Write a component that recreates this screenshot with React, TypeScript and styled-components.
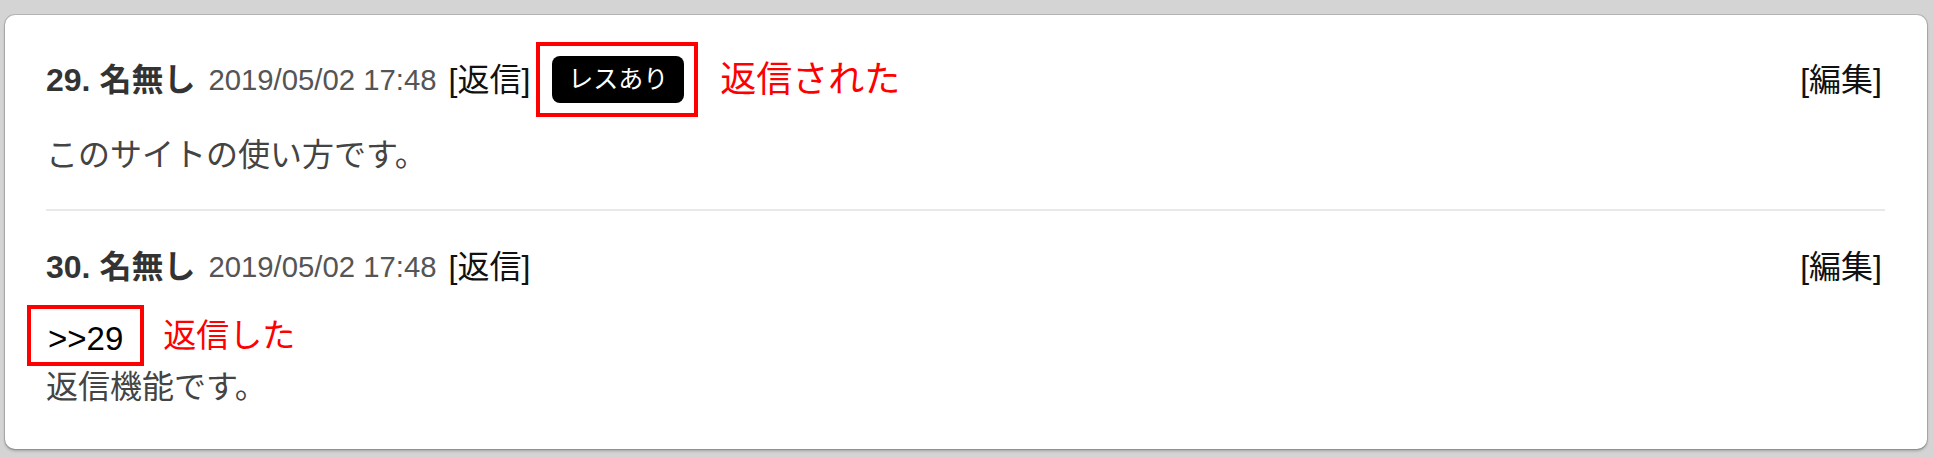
import React from "react";
import styled, { createGlobalStyle } from "styled-components";

const GlobalStyle = createGlobalStyle`
  html, body {
    margin: 0;
    padding: 0;
    background: #d4d4d4;
  }
  body {
    font-family: "Liberation Sans", "Noto Sans CJK JP", sans-serif;
    -webkit-font-smoothing: antialiased;
  }
`;

const Page = styled.div`
  padding: 15px 7px 9px 5px;
`;

const Card = styled.section`
  background: #fff;
  border-radius: 10px;
  box-shadow: 0 0 0 1px rgba(0, 0, 0, 0.14), 0 2px 3px rgba(0, 0, 0, 0.24);
  padding: 27px 42px 38px 41px;
`;

const Post = styled.article`
  display: flex;
  flex-direction: column;
`;

const PostHeader = styled.header<{ $height: number; $top?: number }>`
  display: flex;
  align-items: center;
  justify-content: space-between;
  height: ${(p) => p.$height}px;
  margin-top: ${(p) => p.$top ?? 0}px;
`;

const Meta = styled.div`
  display: flex;
  align-items: center;
`;

const Name = styled.span`
  font-size: 32px;
  font-weight: 700;
  color: #333;
  line-height: 48px;
`;

const DateText = styled.span`
  font-size: 29.3px;
  color: #555;
  margin-left: 13px;
  line-height: 48px;
`;

const Action = styled.a<{ $gap?: number }>`
  font-size: 32px;
  color: #111;
  line-height: 48px;
  padding: 0 3px;
  margin-left: ${(p) => p.$gap ?? 0}px;
  text-decoration: none;
  cursor: pointer;
`;

const Highlight = styled.span<{ $pad: string; $gap?: number }>`
  display: inline-flex;
  align-items: center;
  border: 4px solid #f00;
  padding: ${(p) => p.$pad};
  margin-left: ${(p) => p.$gap ?? 0}px;
`;

const Badge = styled.span`
  display: inline-block;
  background: #000;
  color: #fff;
  font-size: 25px;
  line-height: 47px;
  height: 47px;
  padding: 0 16px;
  border-radius: 8px;
`;

const Note = styled.span<{ $size: number; $gap: number }>`
  color: #f00;
  font-size: ${(p) => p.$size}px;
  line-height: 48px;
  margin-left: ${(p) => p.$gap}px;
`;

const Body = styled.p<{ $top: number }>`
  margin: ${(p) => p.$top}px 0 0 0;
  font-size: 32px;
  line-height: 48px;
  color: #444;
`;

const Divider = styled.hr`
  border: none;
  height: 2px;
  background: #e9e9e9;
  margin: 30px 0 0 0;
`;

const ReplyRow = styled.div`
  display: flex;
  align-items: center;
  margin-top: 14px;
  margin-left: -19px;
`;

const Anchor = styled.span`
  font-size: 33px;
  line-height: 45px;
  color: #000;
`;

export default function App() {
  return (
    <>
      <GlobalStyle />
      <Page>
        <Card>
          <Post>
            <PostHeader $height={75}>
              <Meta>
                <Name>29. 名無し</Name>
                <DateText>2019/05/02 17:48</DateText>
                <Action $gap={9}>[返信]</Action>
                <Highlight $pad="10px 10px 10px 12px" $gap={3}>
                  <Badge>レスあり</Badge>
                </Highlight>
                <Note $size={36} $gap={22}>返信された</Note>
              </Meta>
              <Action>[編集]</Action>
            </PostHeader>
            <Body $top={14}>このサイトの使い方です。</Body>
          </Post>
          <Divider />
          <Post>
            <PostHeader $height={48} $top={32}>
              <Meta>
                <Name>30. 名無し</Name>
                <DateText>2019/05/02 17:48</DateText>
                <Action $gap={9}>[返信]</Action>
              </Meta>
              <Action>[編集]</Action>
            </PostHeader>
            <ReplyRow>
              <Highlight $pad="7px 17px 1px 17px">
                <Anchor>&gt;&gt;29</Anchor>
              </Highlight>
              <Note $size={33} $gap={19}>返信した</Note>
            </ReplyRow>
            <Body $top={-3}>返信機能です。</Body>
          </Post>
        </Card>
      </Page>
    </>
  );
}
